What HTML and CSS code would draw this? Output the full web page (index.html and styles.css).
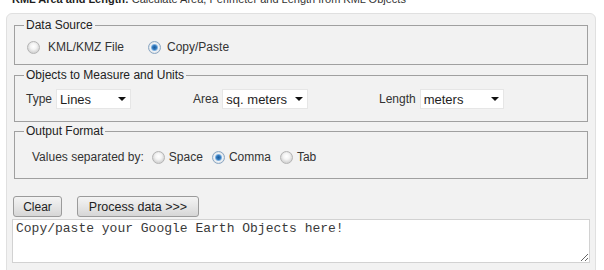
FILE: index.html
```html
<!DOCTYPE html>
<html lang="en">
    <head>
        <meta charset="utf-8" />
        <title>KML Area and Length</title>
        <link rel="stylesheet" href="styles.css">
    </head>
    <body>
        <div class="title"><b>KML Area and Length:</b> Calculate Area, Perimeter and Length from KML Objects</div>
        <div class="panel">
            <fieldset class="group groupSource">
                <legend>Data Source</legend>
                <div class="row sourceRow">
                    <label class="choice choiceWide"><input type="radio" name="source" value="file" /> KML/KMZ File</label>
                    <label class="choice choiceMid"><input type="radio" name="source" value="paste" checked /> Copy/Paste</label>
                </div>
            </fieldset>
            <fieldset class="group groupUnits">
                <legend>Objects to Measure and Units</legend>
                <div class="unitsRow">
                    <label class="unit">Type
                        <span class="selectWrap"><select class="pick pickType">
                            <option>Lines</option>
                            <option>Polygons</option>
                        </select></span>
                    </label>
                    <label class="unit">Area
                        <span class="selectWrap"><select class="pick pickArea">
                            <option>sq. meters</option>
                            <option>hectares</option>
                            <option>sq. km</option>
                        </select></span>
                    </label>
                    <label class="unit">Length
                        <span class="selectWrap"><select class="pick pickLength">
                            <option>meters</option>
                            <option>kilometers</option>
                        </select></span>
                    </label>
                </div>
            </fieldset>
            <fieldset class="group groupOutput">
                <legend>Output Format</legend>
                <div class="row outputRow">
                    <span class="outputLabel">Values separated by:</span>
                    <label class="choice"><input type="radio" name="sep" value="space" /> Space</label>
                    <label class="choice"><input type="radio" name="sep" value="comma" checked /> Comma</label>
                    <label class="choice"><input type="radio" name="sep" value="tab" /> Tab</label>
                </div>
            </fieldset>
            <div class="actions">
                <button type="button" class="btn btnClear">Clear</button>
                <button type="button" class="btn btnProcess">Process data &gt;&gt;&gt;</button>
            </div>
            <textarea class="input" id="in">Copy/paste your Google Earth Objects here!</textarea>
        </div>
    </body>
</html>
```

FILE: styles.css
```css
html, body {
    margin: 0;
    background-color: #ffffff;
    font-family: "Liberation Sans", Arial, sans-serif;
    color: #2a2a2a;
}

.title {
    margin: -7px 0 0 12px;
    font-size: 11px;
    line-height: 13px;
    color: #333;
    white-space: nowrap;
}

.title b {
    color: #1e1e1e;
}

.panel {
    margin: 7px 8px 0 6px;
    padding: 4px 7px 20px 7px;
    background-color: #f2f2f2;
    border: 1px solid #e0e0e0;
    border-radius: 6px;
}

.group {
    margin: 0;
    border: 1px solid #a0a0a0;
    padding: 0 9px;
    min-width: 0;
}

.group legend {
    padding: 0 2px;
    font-size: 12px;
    line-height: 14px;
    color: #222;
}

.groupSource {
    padding-top: 5px;
    padding-bottom: 7px;
}

.groupUnits {
    margin-top: 3px;
    padding-top: 7px;
    padding-bottom: 12px;
}

.groupOutput {
    margin-top: 2px;
    padding-top: 9px;
    padding-bottom: 11px;
}

.row {
    display: flex;
    align-items: center;
    height: 20px;
    font-size: 12px;
    color: #333;
}

.sourceRow {
    padding-left: 3px;
    gap: 24px;
}

.choice {
    display: inline-flex;
    align-items: center;
    gap: 4px;
}

.choiceWide {
    gap: 8px;
}

.choiceMid {
    gap: 6px;
}

.choice input {
    appearance: none;
    -webkit-appearance: none;
    margin: 0;
    width: 13px;
    height: 13px;
    border: 1px solid #b4b4b4;
    border-radius: 50%;
    background: radial-gradient(circle at 50% 40%, #ffffff 0, #f4f4f4 3px, #d6d6d6 6px);
}

.choice input:checked {
    border-color: #8aa7c4;
    background: radial-gradient(circle at 50% 50%, #1d5a9a 0, #2f78bd 2px, #7fb0de 3px, #eef3f8 4px, #dcdcdc 6px);
}

.outputRow {
    padding-left: 8px;
}

.outputLabel {
    margin-right: 8px;
}

.outputRow .choice + .choice {
    margin-left: 9px;
}

.unitsRow {
    display: grid;
    grid-template-columns: 167px 186px auto;
    padding-left: 2px;
    height: 20px;
    font-size: 12px;
    color: #333;
}

.unit {
    display: flex;
    align-items: center;
    gap: 4px;
}

.selectWrap {
    position: relative;
    display: inline-block;
    height: 20px;
}

.selectWrap::after {
    content: "";
    position: absolute;
    right: 5px;
    top: 8px;
    border-left: 4px solid transparent;
    border-right: 4px solid transparent;
    border-top: 4px solid #111;
    pointer-events: none;
}

.pick {
    appearance: none;
    -webkit-appearance: none;
    height: 20px;
    margin: 0;
    padding: 0 0 0 3px;
    border: 1px solid #e6e6e6;
    border-radius: 0;
    background-color: #ffffff;
    font-family: "Liberation Sans", Arial, sans-serif;
    font-size: 13px;
    color: #1e1e1e;
}

.pickType {
    width: 75px;
}

.pickArea {
    width: 86px;
}

.pickLength {
    width: 84px;
}

.actions {
    display: flex;
    gap: 15px;
    margin: 17px 0 0 -1px;
}

.btn {
    height: 21px;
    padding: 0;
    border: 1px solid #9b9b9b;
    border-radius: 3px;
    background: linear-gradient(#f4f4f4, #e6e6e6 50%, #d6d6d6);
    font-family: "Liberation Sans", Arial, sans-serif;
    font-size: 12px;
    color: #222;
}

.btnClear {
    width: 49px;
}

.btnProcess {
    width: 122px;
    font-size: 12.5px;
}

.input {
    display: block;
    box-sizing: border-box;
    width: calc(100% + 4px);
    height: 44px;
    margin: 2px -2px 0 -2px;
    padding: 1px 3px;
    border: 1px solid #d2d2d2;
    background-color: #ffffff;
    font-family: "Liberation Mono", "Courier New", monospace;
    font-size: 13px;
    line-height: 15px;
    color: #3a3a3a;
}
```
